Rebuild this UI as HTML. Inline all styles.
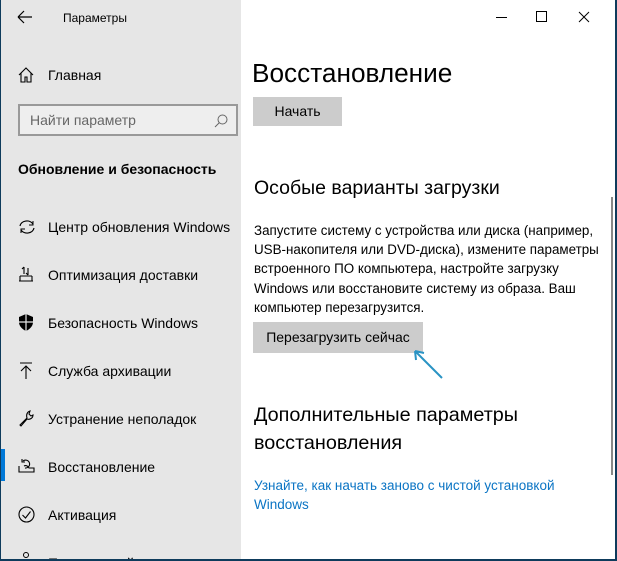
<!DOCTYPE html>
<html><head><meta charset="utf-8"><style>
*{margin:0;padding:0;box-sizing:border-box}
html,body{width:617px;height:561px;overflow:hidden;background:#fff;font-family:"Liberation Sans","DejaVu Sans",sans-serif;color:#000}
.win{position:absolute;left:0;top:0;width:617px;height:561px;border:1px solid #0e3b5c;border-top:none;border-right:2px solid #0e3b5c;border-bottom:2px solid #0e3b5c}
.side{position:absolute;left:1px;top:0;width:240px;height:559px;background:#e6e6e6;overflow:hidden}
.t{position:absolute;white-space:nowrap}
.nav{position:absolute;left:47px;font-size:14px;color:#000}
.ic{position:absolute;left:17px}
.search{position:absolute;left:17px;top:104px;width:220px;height:32px;border:2px solid #999;background:#eee;font-size:14px;color:#666;padding:6px 0 0 10px}
.btn{position:absolute;background:#ccc;font-size:14px;text-align:center}
p.body{position:absolute;left:254px;top:221px;width:362px;font-size:13.4px;line-height:19.2px}
</style></head><body>
<div class="win"></div>
<div class="side">
 <svg class="t" style="left:16px;top:10px" width="16" height="14"><path d="M1 7H15M1 7L7 1M1 7L7 13" stroke="#000" stroke-width="1.2" fill="none"/></svg>
 <div class="t" style="left:62px;top:11px;font-size:12px">Параметры</div>
 <svg class="ic" style="top:67px" width="16" height="16"><path d="M1 8L8 1L15 8M3 6V15H7V10H9V15H13V6" stroke="#000" stroke-width="1.1" fill="none"/></svg>
 <div class="nav" style="top:67px">Главная</div>
 <div class="search">Найти параметр<svg style="position:absolute;right:8px;top:8px" width="14" height="14"><circle cx="8.5" cy="5.5" r="4.5" stroke="#666" fill="none"/><path d="M5.5 8.5L1 13" stroke="#666"/></svg></div>
 <div class="t" style="left:17px;top:161px;font-size:14px;font-weight:bold">Обновление и безопасность</div>
 <svg class="ic" style="top:219px" width="18" height="16"><path d="M2 7A7 6 0 0 1 15 5M16 9A7 6 0 0 1 3 11" stroke="#000" stroke-width="1.2" fill="none"/><path d="M15 2V6H11M3 14V10H7" stroke="#000" stroke-width="1" fill="none"/></svg>
 <div class="nav" style="top:219px">Центр обновления Windows</div>
 <svg class="ic" style="top:266px" width="16" height="16"><path d="M1 15H15M2 15V10M14 15V10M2 10H14M6 1V8M4 3L6 1M10 2V9M8 7L10 9" stroke="#000" stroke-width="1.1" fill="none"/></svg>
 <div class="nav" style="top:267px">Оптимизация доставки</div>
 <svg class="ic" style="top:314px" width="16" height="17"><path d="M8 0L1 3V8C1 12 4 15 8 17C12 15 15 12 15 8V3Z" fill="#000"/><path d="M8 0V17M1 8H15" stroke="#e6e6e6" stroke-width="1.2"/></svg>
 <div class="nav" style="top:315px">Безопасность Windows</div>
 <svg class="ic" style="top:362px" width="16" height="18"><path d="M2 1H14M8 4V17M3 9L8 4L13 9" stroke="#000" stroke-width="1.1" fill="none"/></svg>
 <div class="nav" style="top:363px">Служба архивации</div>
 <svg class="ic" style="top:410px" width="16" height="17"><path d="M2 15L9 8C8 5 9 2 12 1L11 4L13 6L15 5C15 8 12 10 9 9L3 16Z" stroke="#000" stroke-width="1.1" fill="none"/></svg>
 <div class="nav" style="top:411px">Устранение неполадок</div>
 <div style="position:absolute;left:0;top:449px;width:4px;height:32px;background:#0078d7"></div>
 <svg class="ic" style="top:458px" width="17" height="16"><path d="M1 8V14H16V10H11C10 8 8 7 6 8" stroke="#000" stroke-width="1.1" fill="none"/><path d="M5 3A4 4 0 1 1 7 10M4 1V4H7" stroke="#000" stroke-width="1.1" fill="none"/></svg>
 <div class="nav" style="top:459px">Восстановление</div>
 <svg class="ic" style="top:506px" width="17" height="17"><circle cx="8.5" cy="8.5" r="7.5" stroke="#000" stroke-width="1.1" fill="none"/><path d="M4.5 9L7.5 12L12.5 5.5" stroke="#000" stroke-width="1.1" fill="none"/></svg>
 <div class="nav" style="top:507px">Активация</div>
 <svg class="ic" style="top:552px" width="16" height="10"><circle cx="8" cy="3" r="2.5" stroke="#000" fill="none"/></svg>
 <div class="nav" style="top:555px">Поиск устройства</div>
</div>
<svg class="t" style="left:495px;top:10px" width="110" height="16"><path d="M1 7.5H12" stroke="#000"/><rect x="41.5" y="1.5" width="10" height="10" stroke="#000" fill="none"/><path d="M84 2L94 12M94 2L84 12" stroke="#000"/></svg>
<div class="t" style="left:252px;top:58px;font-size:26.2px">Восстановление</div>
<div class="btn" style="left:253px;top:97px;width:89px;height:29px;line-height:29px">Начать</div>
<div class="t" style="left:254px;top:177px;font-size:19.5px">Особые варианты загрузки</div>
<p class="body">Запустите систему с устройства или диска (например, USB-накопителя или DVD-диска), измените параметры встроенного ПО компьютера, настройте загрузку Windows или восстановите систему из образа. Ваш компьютер перезагрузится.</p>
<div class="btn" style="left:253px;top:322px;width:170px;height:31px;line-height:31px">Перезагрузить сейчас</div>
<svg class="t" style="left:410px;top:345px" width="40" height="40"><path d="M32 33L5 6M5 6L6 15M5 6L14 8" stroke="#2a93c4" stroke-width="2" fill="none"/></svg>
<div class="t" style="left:254px;top:401px;font-size:19.8px;line-height:28px;white-space:normal;width:340px">Дополнительные параметры восстановления</div>
<div class="t" style="left:254px;top:476px;font-size:13.5px;line-height:19px;color:#0a74c4;white-space:normal;width:330px">Узнайте, как начать заново с чистой установкой Windows</div>
<div style="position:absolute;left:611px;top:197px;width:2px;height:278px;background:#888"></div>
</body></html>
